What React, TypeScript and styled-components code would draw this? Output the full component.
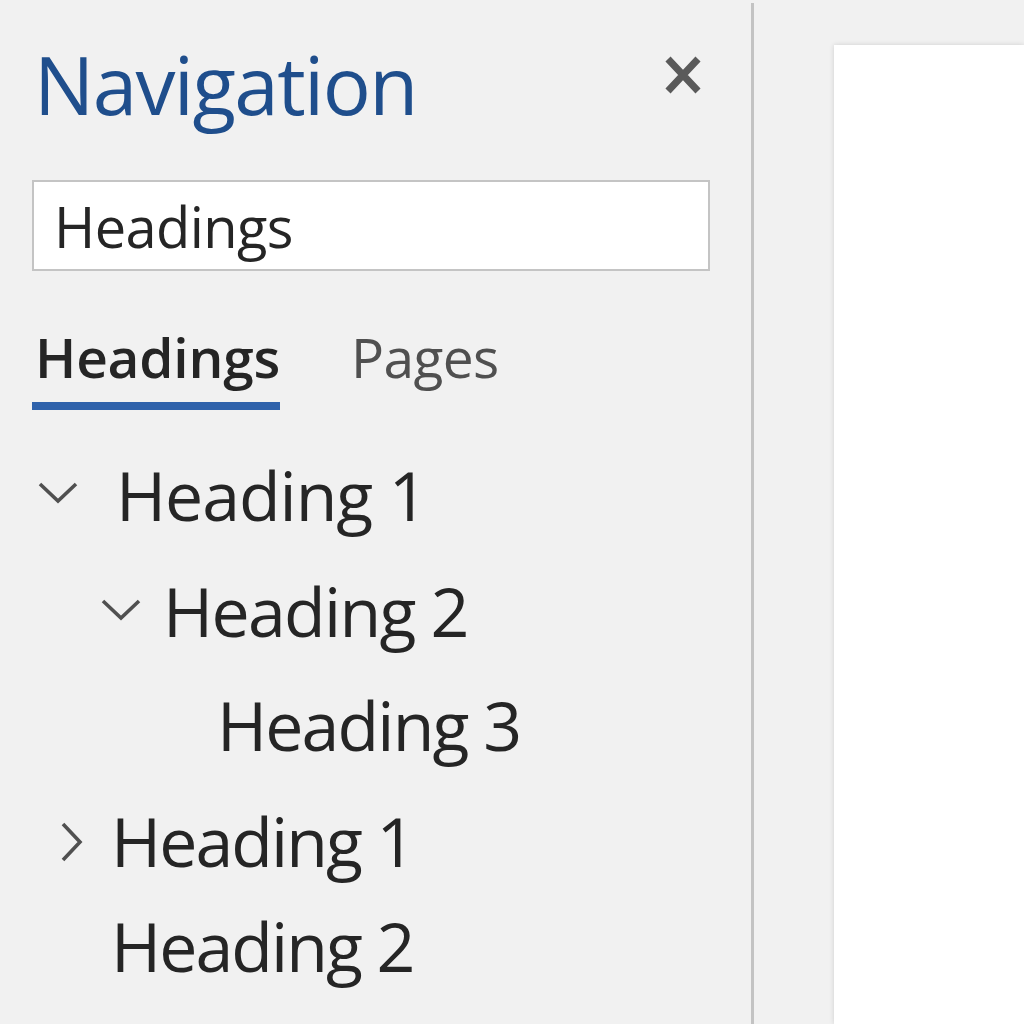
import React from "react";
import styled, { createGlobalStyle } from "styled-components";

const Global = createGlobalStyle`
  html, body { margin: 0; padding: 0; background: #f1f1f1; }
  body { font-family: "Open Sans", "Noto Sans", sans-serif; }
  * { box-sizing: border-box; }
`;
const Page = styled.div`
  width: 1024px; height: 1024px; display: flex; overflow: hidden; background: #f1f1f1;
`;
const Panel = styled.aside`
  width: 751px; flex: none; padding: 0 41px 0 32px; display: flex; flex-direction: column;
`;
const Divider = styled.div`
  width: 3px; flex: none; margin-top: 3px; background: #c3c3c3;
`;
const Canvas = styled.main`
  flex: 1; padding: 45px 0 0 80px; display: flex;
`;
const Sheet = styled.div`
  flex: 1; background: #fff; box-shadow: 0 0 5px rgba(0,0,0,.14);
`;
const TitleRow = styled.header`
  height: 180px; display: flex; justify-content: space-between; align-items: flex-start;
`;
const Title = styled.h1`
  margin: 39px 0 0 2px; font-size: 80px; line-height: 90px; font-weight: 400; color: #1f4e8c; letter-spacing: -1.6px;
`;
const Close = styled.button`
  border: 0; background: none; padding: 0; margin: 56px 9px 0 0; width: 36px; height: 38px; display: flex;
`;
const Search = styled.div`
  height: 91px; width: 678px; border: 2px solid #c4c4c4; background: #fff; padding: 0 0 0 20px;
  display: flex; align-items: center; font-size: 56px; color: #252525; letter-spacing: -0.6px;
`;
const Tabs = styled.nav`
  margin-top: 52px; display: flex; gap: 71px;
`;
const Tab = styled.div<{ $active?: boolean }>`
  height: 87px; font-size: 55px; line-height: 68px;
  letter-spacing: ${p => (p.$active ? "-0.2px" : "-0.6px")};
  font-weight: ${p => (p.$active ? 600 : 400)};
  color: ${p => (p.$active ? "#252525" : "#505050")};
  border-bottom: ${p => (p.$active ? "8px solid #2f62ab" : "0")};
  padding-left: ${p => (p.$active ? "3px" : "0")};
`;
const Tree = styled.ul`
  list-style: none; margin: 26px 0 0; padding: 0; display: flex; flex-direction: column;
`;
const Row = styled.li<{ $indent: number; $h: number; $track: number }>`
  height: ${p => p.$h}px; padding-left: ${p => p.$indent}px; display: flex; align-items: center;
  font-size: 68px; color: #252525; letter-spacing: ${p => p.$track}px; white-space: nowrap;
`;
const DownIcon = styled.svg<{ $gap: number }>`
  flex: none; display: block; margin: 0 ${p => p.$gap}px 4px 0;
`;
const RightIcon = styled.svg<{ $gap: number }>`
  flex: none; display: block; margin: 3px ${p => p.$gap}px 0 0;
`;
const Down = ({ gap }: { gap: number }) => (
  <DownIcon $gap={gap} width="40" height="24" viewBox="0 0 40 24">
    <path d="M2 4 L20 21 L38 4" fill="none" stroke="#505050" strokeWidth="3.6" />
  </DownIcon>
);
const Right = ({ gap }: { gap: number }) => (
  <RightIcon $gap={gap} width="24" height="40" viewBox="0 0 24 40">
    <path d="M3 2 L20 20 L3 38" fill="none" stroke="#505050" strokeWidth="3.6" />
  </RightIcon>
);

export default function App() {
  return (
    <Page>
      <Global />
      <Panel>
        <TitleRow>
          <Title>Navigation</Title>
          <Close aria-label="Close">
            <svg width="36" height="38" viewBox="0 0 36 38">
              <path d="M3 3 L33 35 M33 3 L3 35" stroke="#5a5a5a" strokeWidth="7" fill="none" />
            </svg>
          </Close>
        </TitleRow>
        <Search>Headings</Search>
        <Tabs>
          <Tab $active>Headings</Tab>
          <Tab>Pages</Tab>
        </Tabs>
        <Tree>
          <Row $indent={6} $h={116} $track={-1.05}><Down gap={38} />Heading 1</Row>
          <Row $indent={69} $h={117} $track={-1.7}><Down gap={22} />Heading 2</Row>
          <Row $indent={185} $h={111} $track={-1.85}>Heading 3</Row>
          <Row $indent={28} $h={121} $track={-1.95}><Right gap={27} />Heading 1</Row>
          <Row $indent={79} $h={89} $track={-1.95}>Heading 2</Row>
        </Tree>
      </Panel>
      <Divider />
      <Canvas><Sheet /></Canvas>
    </Page>
  );
}
